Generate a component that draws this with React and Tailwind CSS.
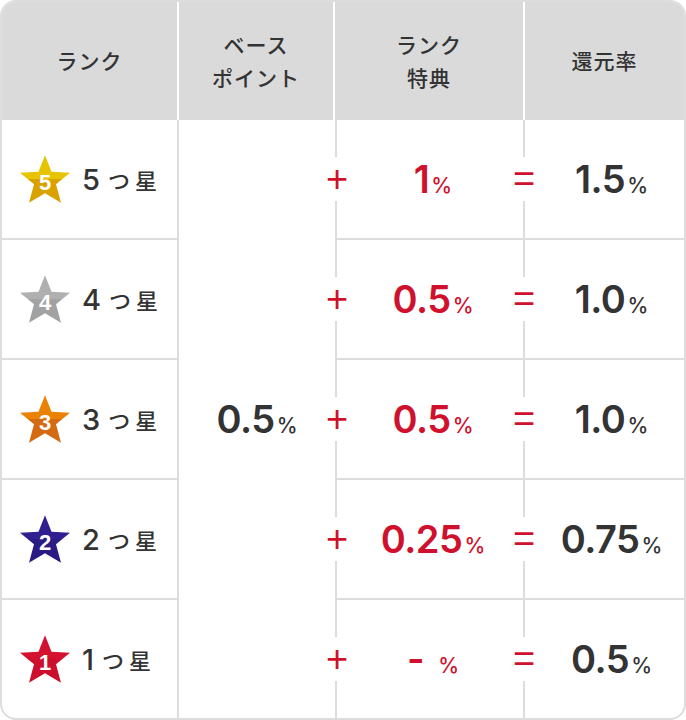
import React from "react";

const JP = { fontFamily: '"Noto Sans CJK JP", "Noto Sans", sans-serif' };
const NUM = { fontFamily: 'Inter, "Liberation Sans", Arial, sans-serif' };
const SYM = { fontFamily: '"Liberation Sans", Arial, sans-serif' };

const ranks = [
  { n: "5", top: "#e8c300", bottom: "#d9a200", bonus: "1", total: "1.5" },
  { n: "4", top: "#b0b0b0", bottom: "#a2a2a2", bonus: "0.5", total: "1.0" },
  { n: "3", top: "#ea8100", bottom: "#d46a12", bonus: "0.5", total: "1.0" },
  { n: "2", top: "#2f1f90", bottom: "#2a1a84", bonus: "0.25", total: "0.75" },
  { n: "1", top: "#d4122f", bottom: "#cc0f2c", bonus: "-", total: "0.5" },
];

function Star({ n, top, bottom }) {
  const id = `star-grad-${n}`;
  return (
    <svg width="50" height="48" viewBox="0 0 100 95" className="shrink-0">
      <defs>
        <linearGradient id={id} x1="0" y1="0" x2="0" y2="1">
          <stop offset="0.5" stopColor={top} />
          <stop offset="0.5" stopColor={bottom} />
        </linearGradient>
      </defs>
      <polygon
        points="50,0 63,33 100,35 72,58 82,95 50,76 18,95 28,58 0,35 37,33"
        fill={`url(#${id})`}
      />
      <text
        x="50"
        y="70"
        textAnchor="middle"
        fill="#fff"
        fontSize="44"
        fontWeight="700"
        fontFamily='"Liberation Sans", Arial, sans-serif'
      >
        {n}
      </text>
    </svg>
  );
}

function Value({ v, red }) {
  return (
    <span className={`flex items-baseline ${red ? "text-[#d0112d]" : "text-[#333333]"}`} style={NUM}>
      <span className="text-[38px] font-semibold leading-none tracking-[-0.5px]">{v}</span>
      <span className={`text-[21px] font-medium leading-none ${v === "-" ? "ml-[14px]" : "ml-[2px]"}`}>%</span>
    </span>
  );
}

export default function App() {
  return (
    <div className="w-[686px] h-[720px] bg-white">
      <div className="w-[686px] h-[720px] rounded-[16px] border-2 border-[#dddddd] overflow-hidden">
        <div className="grid grid-cols-[177px_156px_190px_159px] grid-rows-[118px_120px_120px_120px_120px_118px] text-[#333333]">
          {/* header */}
          <div className="bg-[#dadada] border-r-2 border-white flex items-center justify-center text-[21px] font-medium tracking-[1px]" style={JP}>
            ランク
          </div>
          <div className="bg-[#dadada] border-r-2 border-white flex flex-col items-center justify-center text-[21px] font-medium leading-[33px] tracking-[1px]" style={JP}>
            <span>ベース</span>
            <span>ポイント</span>
          </div>
          <div className="bg-[#dadada] border-r-2 border-white flex flex-col items-center justify-center text-[21px] font-medium leading-[33px] tracking-[1px]" style={JP}>
            <span>ランク</span>
            <span>特典</span>
          </div>
          <div className="bg-[#dadada] flex items-center justify-center text-[21px] font-medium tracking-[1px]" style={JP}>
            還元率
          </div>

          {/* base point column */}
          <div className="col-start-2 row-start-2 row-span-5 flex items-center justify-center">
            <Value v="0.5" />
          </div>

          {ranks.map((r, i) => {
            const last = i === ranks.length - 1;
            const row = ["row-start-2", "row-start-3", "row-start-4", "row-start-5", "row-start-6"][i];
            return (
              <React.Fragment key={r.n}>
                <div className={`col-start-1 ${row} border-r-2 border-[#dddddd] ${last ? "" : "border-b-2"} flex items-center pl-[18px]`}>
                  <Star n={r.n} top={r.top} bottom={r.bottom} />
                  <span className="ml-[12px] text-[29px] font-medium leading-none text-[#333333]" style={NUM}>
                    {r.n}
                  </span>
                  <span className="ml-[8px] text-[22px] font-medium tracking-[5px] text-[#333333]" style={JP}>
                    つ星
                  </span>
                </div>
                <div className={`col-start-3 ${row} relative border-l-2 border-r-2 border-[#dddddd] ${last ? "" : "border-b-2"} flex items-center justify-center pl-[6px]`}>
                  <div className="absolute left-[-15px] top-1/2 -translate-y-1/2 z-10 w-[30px] h-[44px] bg-white flex items-center justify-center">
                    <span className="text-[38px] leading-none text-[#d0112d]" style={SYM}>+</span>
                  </div>
                  <Value v={r.bonus} red />
                  <div className="absolute right-[-16px] top-1/2 -translate-y-1/2 z-10 w-[30px] h-[44px] bg-white flex items-center justify-center">
                    <span className="text-[38px] leading-none text-[#d0112d]" style={SYM}>=</span>
                  </div>
                </div>
                <div className={`col-start-4 ${row} ${last ? "" : "border-b-2"} border-[#dddddd] flex items-center justify-center pl-[14px]`}>
                  <Value v={r.total} />
                </div>
              </React.Fragment>
            );
          })}
        </div>
      </div>
    </div>
  );
}
